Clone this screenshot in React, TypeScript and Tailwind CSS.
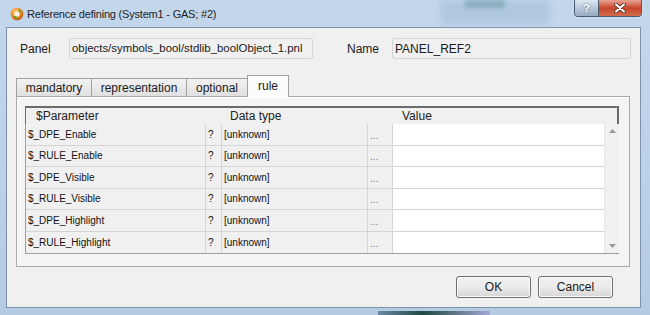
import React from "react";

const rows = [
  "$_DPE_Enable",
  "$_RULE_Enable",
  "$_DPE_Visible",
  "$_RULE_Visible",
  "$_DPE_Highlight",
  "$_RULE_Highlight",
];

const font = { fontFamily: '"Liberation Sans", Arial, sans-serif' };

function AppIcon() {
  return (
    <svg width="14" height="14" viewBox="0 0 14 14">
      <defs>
        <radialGradient id="og" cx="40%" cy="35%" r="70%">
          <stop offset="0%" stopColor="#ffd27a" />
          <stop offset="60%" stopColor="#f08a1c" />
          <stop offset="100%" stopColor="#b8520a" />
        </radialGradient>
      </defs>
      <circle cx="7" cy="7" r="6.3" fill="url(#og)" />
      <circle cx="7" cy="7" r="2.6" fill="#f7f7f0" />
      <path d="M3 9 L7 12.5 L6.5 9.5 Z" fill="#3aa035" />
      <path d="M8.5 2 L12 5 L9 5.5 Z" fill="#4caf3a" />
    </svg>
  );
}

export default function App() {
  return (
    <div
      className="w-[650px] h-[315px] relative overflow-hidden flex flex-col bg-gradient-to-b from-[#c3d7ec] via-[#bcd2ea] to-[#b4cbe4]"
      style={font}
    >
      {/* blurred background hints */}
      <div className="absolute left-[440px] top-0 w-[110px] h-[24px] bg-[#a7c2db] opacity-70 blur-[3px]" />
      <div className="absolute left-[465px] top-0 w-[40px] h-[8px] bg-[#6f9aa6] opacity-60 blur-[2px]" />
      <div className="absolute left-[378px] bottom-0 w-[112px] h-[4px] bg-gradient-to-r from-[#6d8aa6] via-[#1e4a44] via-40% to-[#a6a8d8]" />

      {/* title bar */}
      <div className="h-[27px] flex items-start relative">
        <div className="ml-[10px] mt-[7px]">
          <AppIcon />
        </div>
        <div className="ml-[3px] mt-[6px] text-[11px] tracking-[-0.2px] text-[#1e1e1e]">
          Reference defining (System1 - GAS; #2)
        </div>
        <div className="ml-auto mr-[8px] flex h-[17px] rounded-b-[4px] border border-t-0 border-[#4a5a6e] overflow-hidden shadow-[0_0_2px_rgba(255,255,255,0.8)]">
          <div className="w-[24px] h-full flex items-center justify-center bg-gradient-to-b from-[#dfe8f2] via-[#b9c8d8] to-[#98abc0] border-r border-[#4a5a6e] text-[11px] font-bold text-white [text-shadow:0_0_2px_#4a5a6e]">
            ?
          </div>
          <div className="w-[42px] h-full flex items-center justify-center bg-gradient-to-b from-[#e8a493] via-[#c7452c] to-[#d26b4c]">
            <svg width="12" height="10" viewBox="0 0 12 10">
              <path d="M2 1.5 L10 8.5 M10 1.5 L2 8.5" stroke="#3a1a14" strokeWidth="3.6" strokeLinecap="round" />
              <path d="M2 1.5 L10 8.5 M10 1.5 L2 8.5" stroke="#ffffff" strokeWidth="2.2" strokeLinecap="round" />
            </svg>
          </div>
        </div>
      </div>

      {/* client area */}
      <div className="ml-[6px] mr-[9px] h-[281px] bg-[#f0f0f0] border border-[#7e93ab] flex flex-col text-[#1a1a1a]">
        {/* Panel / Name row */}
        <div className="mt-[10px] flex items-center h-[21px]">
          <span className="ml-[13px] w-[49px] text-[12px]">Panel</span>
          <div className="w-[244px] h-[21px] border border-[#d5d5d5] rounded-[2px] bg-[#f0f0f0] flex items-center pl-[2px] text-[11.4px] whitespace-nowrap overflow-hidden">
            objects/symbols_bool/stdlib_boolObject_1.pnl
          </div>
          <span className="ml-[34px] w-[45px] text-[12px]">Name</span>
          <div className="w-[239px] h-[21px] border border-[#d5d5d5] rounded-[2px] bg-[#f0f0f0] flex items-center pl-[2px] text-[12px]">
            PANEL_REF2
          </div>
        </div>

        {/* tabs */}
        <div className="mt-[16px] ml-[9px] flex items-end h-[21px] relative z-10">
          {[
            ["mandatory", 75],
            ["representation", 95],
            ["optional", 61],
          ].map(([t, w]) => (
            <div
              key={t as string}
              className="h-[18px] border border-b-0 border-[#a0a0a0] -mr-px bg-gradient-to-b from-[#f2f2f2] to-[#e0e0e0] flex items-center justify-center text-[12px]"
              style={{ width: (w as number) + 1 }}
            >
              {t}
            </div>
          ))}
          <div className="w-[42px] h-[22px] -mb-px border border-b-0 border-[#a0a0a0] bg-[#fcfcfc] flex items-center justify-center text-[12px] pb-[2px]">
            rule
          </div>
        </div>

        {/* tab pane */}
        <div className="ml-[9px] w-[614px] h-[171px] border border-[#a8a8a8] bg-[#f4f4f4] shadow-[inset_1px_1px_0_#ffffff] pt-[9px] pl-[8px]">
          <div className="w-[594px] border-l border-b border-[#a0a0a0]">
            {/* header */}
            <div className="h-[18px] grid grid-cols-[180px_16px_146px_25px_227px] bg-[#f0f0f0] border-t-2 border-l border-r-2 border-t-[#6b6b6b] border-l-[#6b6b6b] border-r-[#6b6b6b] -ml-px text-[12px] text-[#222]">
              <div className="pl-[10px] leading-[16px]">$Parameter</div>
              <div className="col-span-3 leading-[16px] pl-[24px]">Data type</div>
              <div className="leading-[16px] pl-[9px]">Value</div>
            </div>
            {/* body */}
            <div className="flex">
              <div className="w-[578px]">
                {rows.map((r, i) => (
                  <div
                    key={r}
                    className={`h-[21.5px] grid grid-cols-[180px_16px_146px_25px_211px] text-[10px] text-[#111] ${i < rows.length - 1 ? "border-b border-[#d4d4d4]" : ""}`}
                  >
                    <div className="bg-[#f0f0f0] border-r border-[#d4d4d4] pl-[2px] flex items-center">{r}</div>
                    <div className="bg-[#f0f0f0] border-r border-[#d4d4d4] pl-[2px] flex items-center">?</div>
                    <div className="bg-[#f0f0f0] border-r border-[#d4d4d4] pl-[2px] flex items-center">[unknown]</div>
                    <div className="bg-[#f0f0f0] border-r border-[#d4d4d4] pl-[2px] flex items-center text-[#777] pt-[2px]">...</div>
                    <div className="bg-white"></div>
                  </div>
                ))}
              </div>
              <div className="w-[16px] bg-[#f0f0f0] flex flex-col justify-between items-center py-[5px] border-l border-[#e6e6e6]">
                <svg width="7" height="4" viewBox="0 0 7 4">
                  <path d="M0 4 L3.5 0 L7 4 Z" fill="#9a9a9a" />
                </svg>
                <svg width="7" height="4" viewBox="0 0 7 4">
                  <path d="M0 0 L3.5 4 L7 0 Z" fill="#9a9a9a" />
                </svg>
              </div>
            </div>
          </div>
        </div>

        {/* buttons */}
        <div className="mt-[9px] flex justify-end gap-[7px] mr-[27px]">
          {["OK", "Cancel"].map((b) => (
            <div
              key={b}
              className="w-[75px] h-[22px] rounded-[3px] border border-[#707070] bg-gradient-to-b from-[#f2f2f2] via-[#ebebeb] to-[#d6d6d6] shadow-[inset_0_0_0_1px_#fbfbfb] flex items-center justify-center text-[12px] text-[#1a1a1a]"
            >
              {b}
            </div>
          ))}
        </div>
      </div>
    </div>
  );
}
